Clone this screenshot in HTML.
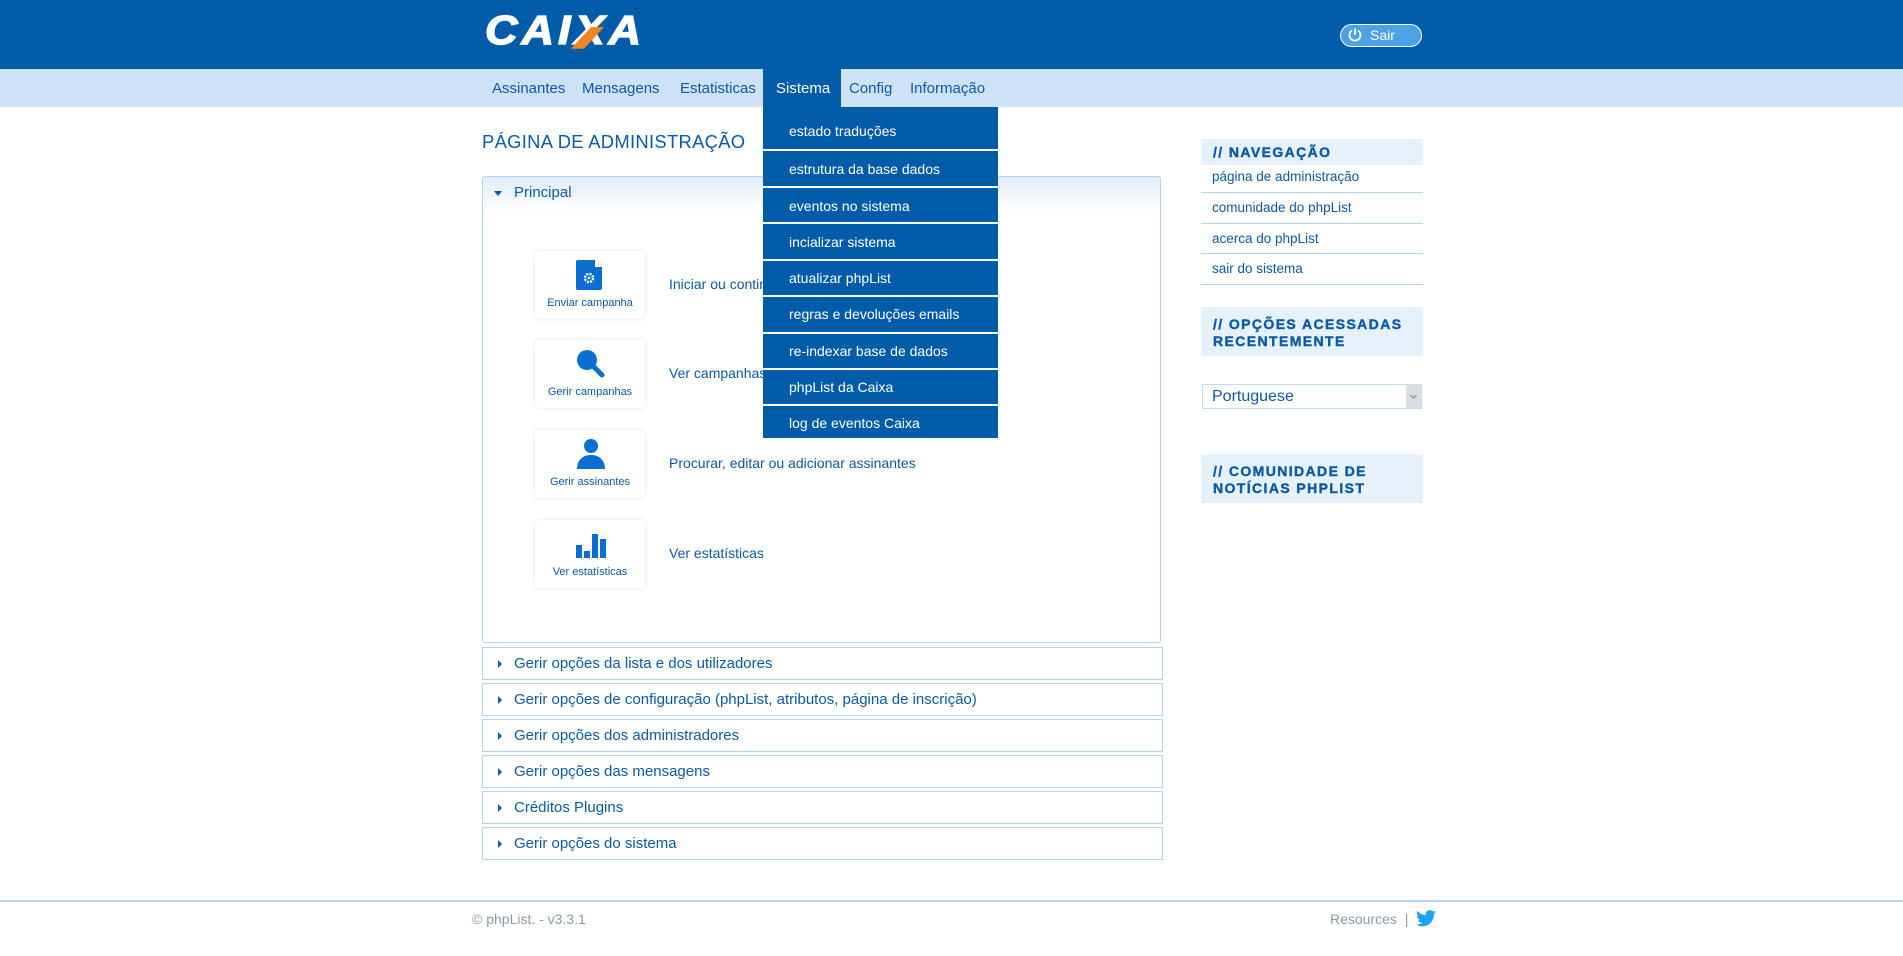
<!DOCTYPE html>
<html><head><meta charset="utf-8"><style>
*{margin:0;padding:0;box-sizing:border-box}
body{width:1903px;height:956px;background:#fff;font-family:"Liberation Sans",Arial,sans-serif;color:#0a5aa8;position:relative;overflow:hidden}
.abs{position:absolute}
#hdr{left:0;top:0;width:1903px;height:69px;background:#005ca9}
#nav{left:0;top:69px;width:1903px;height:38px;background:#cde2f5}
.nv{position:absolute;top:80px;font-size:15px;color:#0a5aa8}
#logo{left:485px;top:10px;font-size:45px;font-weight:bold;font-style:italic;color:#fff;letter-spacing:4px;font-family:"Liberation Sans",Arial,sans-serif;line-height:46px;transform:scaleY(0.9);transform-origin:top left;-webkit-text-stroke:1.5px #fff}
#sair{left:1340px;top:24px;width:82px;height:23px;border:1.5px solid #fff;border-radius:12px;background:#4da1e6;color:#fff;font-size:14px;padding-left:29px;line-height:20px}
#drop{left:763px;top:107px;width:235px;height:331px;background:#005ca9}
.di{position:absolute;left:789px;font-size:14px;color:#fff}
.sep{position:absolute;left:763px;width:235px;height:2px;background:#fff}
#title{left:482px;top:131px;font-size:18.4px;letter-spacing:0.3px;color:#0a5aa8}
#panel{left:482px;top:176px;width:679px;height:467px;border:1px solid #b3d4ef;border-radius:3px;background:linear-gradient(#e1ecf8 0,#fff 36px,#fff 100%)}
.card{position:absolute;left:535px;width:110px;height:68px;background:#fff;border-radius:5px;box-shadow:0 0 4px rgba(0,0,0,0.12);text-align:center;font-size:11px;color:#0a5aa8}
.card .lb{position:absolute;left:0;right:0;bottom:10px}
.card svg{position:absolute;left:40px;top:8px}
.desc{position:absolute;left:669px;font-size:14px}
.row{position:absolute;left:482px;width:681px;height:33px;border:1px solid #b3d4ef;font-size:15px;padding-left:31px;line-height:31px}
.row:before{content:"";position:absolute;left:15px;top:12px;border-left:4px solid #0a5aa8;border-top:4px solid transparent;border-bottom:4px solid transparent}
.sb{position:absolute;left:1201px;width:222px;background:#e6f1fb;font-weight:bold;font-size:14px;letter-spacing:1.4px;padding:6px 2px 6px 12px;line-height:17px;color:#0a5aa8;-webkit-text-stroke:0.4px #0a5aa8;white-space:nowrap}
.sl{position:absolute;left:1201px;width:222px;border-bottom:1px solid #b3d4ef;font-size:13.5px;padding-left:11px}
</style></head><body>
<div id="hdr" class="abs"></div>
<div id="logo" class="abs">CAI<span style="position:relative">X<span style="position:absolute;left:6px;top:22px;width:13px;height:24px;background:#f58220;transform:skewX(-40deg);z-index:1"></span></span>A</div>
<div id="sair" class="abs"><svg class="abs" style="left:6px;top:2px" width="16" height="16" viewBox="0 0 16 16"><path d="M5 3.5A5.5 5.5 0 1 0 11 3.5" fill="none" stroke="#fff" stroke-width="1.8"/><path d="M8 1.5V8" stroke="#fff" stroke-width="1.8"/></svg>Sair</div>
<div id="nav" class="abs"></div>
<div class="nv" style="left:492px">Assinantes</div>
<div class="nv" style="left:582px">Mensagens</div>
<div class="nv" style="left:680px">Estatisticas</div>
<div class="abs" style="left:763px;top:69px;width:78px;height:38px;background:#005ca9"></div>
<div class="nv" style="left:776px;color:#fff">Sistema</div>
<div class="nv" style="left:849px">Config</div>
<div class="nv" style="left:910px">Informação</div>

<div id="title" class="abs">PÁGINA DE ADMINISTRAÇÃO</div>
<div id="panel" class="abs"></div>
<div class="abs" style="left:494px;top:191px;border-top:5px solid #0a5aa8;border-left:4px solid transparent;border-right:4px solid transparent"></div>
<div class="abs" style="left:514px;top:184px;font-size:15px">Principal</div>

<div class="card" style="top:251px"><svg width="30" height="32" viewBox="0 0 30 32"><path d="M3 1h17l7 7v21a2 2 0 0 1-2 2H3a2 2 0 0 1-2-2V3a2 2 0 0 1 2-2z" fill="#0a6fd0"/><path d="M20 1v7h7z" fill="#fff"/><circle cx="14" cy="19" r="4" fill="none" stroke="#fff" stroke-width="2.5" stroke-dasharray="2 1.2"/><circle cx="14" cy="19" r="1.2" fill="#fff"/></svg><div class="lb">Enviar campanha</div></div>
<div class="card" style="top:340px"><svg width="32" height="32" viewBox="0 0 32 32"><circle cx="12" cy="12" r="10" fill="#0a6fd0"/><path d="M19 19l8 8" stroke="#0a6fd0" stroke-width="5" stroke-linecap="round"/></svg><div class="lb">Gerir campanhas</div></div>
<div class="card" style="top:430px"><svg width="32" height="32" viewBox="0 0 32 32"><circle cx="16" cy="8" r="7" fill="#0a6fd0"/><path d="M2 31c0-9 6-14 14-14s14 5 14 14z" fill="#0a6fd0"/></svg><div class="lb">Gerir assinantes</div></div>
<div class="card" style="top:520px"><svg width="32" height="32" viewBox="0 0 32 32"><rect x="1" y="17" width="6" height="13" fill="#0a6fd0"/><rect x="9" y="23" width="6" height="7" fill="#0a6fd0"/><rect x="17" y="6" width="6" height="24" fill="#0a6fd0"/><rect x="25" y="11" width="6" height="19" fill="#0a6fd0"/></svg><div class="lb">Ver estatísticas</div></div>
<div class="desc" style="top:276px">Iniciar ou continuar uma campanha</div>
<div class="desc" style="top:365px">Ver campanhas</div>
<div class="desc" style="top:455px">Procurar, editar ou adicionar assinantes</div>
<div class="desc" style="top:545px">Ver estatísticas</div>

<div id="drop" class="abs"></div>
<div class="sep" style="top:149px"></div><div class="sep" style="top:186px"></div><div class="sep" style="top:222px"></div><div class="sep" style="top:259px"></div><div class="sep" style="top:295px"></div><div class="sep" style="top:332px"></div><div class="sep" style="top:368px"></div><div class="sep" style="top:404px"></div>
<div class="di" style="top:123px">estado traduções</div>
<div class="di" style="top:161px">estrutura da base dados</div>
<div class="di" style="top:198px">eventos no sistema</div>
<div class="di" style="top:234px">incializar sistema</div>
<div class="di" style="top:270px">atualizar phpList</div>
<div class="di" style="top:306px">regras e devoluções emails</div>
<div class="di" style="top:343px">re-indexar base de dados</div>
<div class="di" style="top:379px">phpList da Caixa</div>
<div class="di" style="top:415px">log de eventos Caixa</div>

<div class="row" style="top:647px">Gerir opções da lista e dos utilizadores</div>
<div class="row" style="top:683px">Gerir opções de configuração (phpList, atributos, página de inscrição)</div>
<div class="row" style="top:719px">Gerir opções dos administradores</div>
<div class="row" style="top:755px">Gerir opções das mensagens</div>
<div class="row" style="top:791px">Créditos Plugins</div>
<div class="row" style="top:827px">Gerir opções do sistema</div>

<div class="sb" style="top:139px;height:26px;padding-top:5px">// NAVEGAÇÃO</div>
<div class="sl" style="top:165px;height:28px;line-height:24px">página de administração</div>
<div class="sl" style="top:193px;height:31px;line-height:30px">comunidade do phpList</div>
<div class="sl" style="top:224px;height:30px;line-height:29px">acerca do phpList</div>
<div class="sl" style="top:254px;height:31px;line-height:30px">sair do sistema</div>
<div class="sb" style="top:307px;height:49px;padding-top:9px">// OPÇÕES ACESSADAS<br>RECENTEMENTE</div>
<div class="abs" style="left:1202px;top:384px;width:220px;height:25px;border:1px solid #c4dcf2;font-size:16px;padding-left:9px;line-height:23px">Portuguese<svg class="abs" style="right:0;top:0;background:#dcdde2" width="15" height="23" viewBox="0 0 15 23"><path d="M4.5 10l3 3 3-3" fill="none" stroke="#888" stroke-width="1"/></svg></div>
<div class="sb" style="top:454px;height:49px;padding-top:9px">// COMUNIDADE DE<br>NOTÍCIAS PHPLIST</div>

<div class="abs" style="left:0;top:900px;width:1903px;height:2px;background:#b3d4ef"></div>
<div class="abs" style="left:472px;top:911px;font-size:14px;color:#8a9aab">© phpList. - v3.3.1</div>
<div class="abs" style="left:1330px;top:911px;font-size:14px;color:#8a9aab">Resources &nbsp;|</div>
<svg class="abs" style="left:1416px;top:910px" width="20" height="17" viewBox="0 0 24 20"><path d="M24 2.4a9.8 9.8 0 0 1-2.8.8A4.9 4.9 0 0 0 23.3.4a9.9 9.9 0 0 1-3.1 1.2A4.9 4.9 0 0 0 11.8 6 14 14 0 0 1 1.7.9a4.9 4.9 0 0 0 1.5 6.6A4.9 4.9 0 0 1 1 6.9a4.9 4.9 0 0 0 3.9 4.8 4.9 4.9 0 0 1-2.2.1 4.9 4.9 0 0 0 4.6 3.4A9.9 9.9 0 0 1 0 17.2 14 14 0 0 0 7.5 19.4c9.1 0 14-7.5 14-14v-.6A10 10 0 0 0 24 2.4z" fill="#1da1f2"/></svg>
</body></html>
